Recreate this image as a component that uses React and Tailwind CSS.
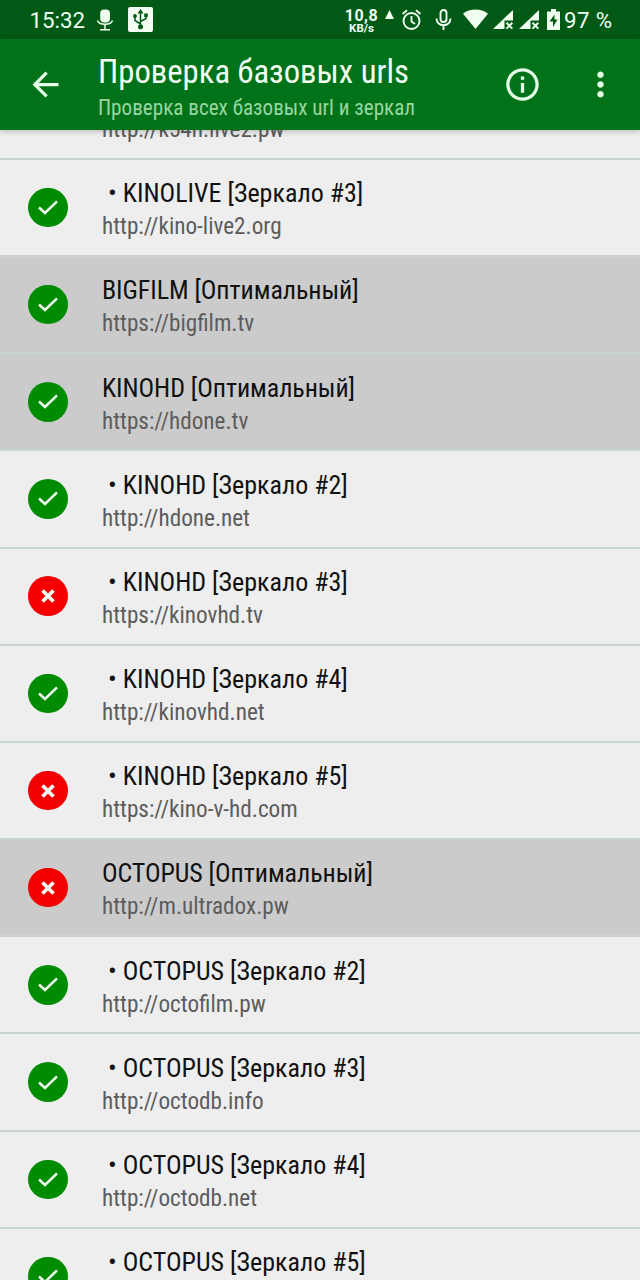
import React from 'react';
import { MdArrowBack, MdInfoOutline, MdMoreVert } from 'react-icons/md';

const ITEMS = [
  { title: 'KINOLIVE [Зеркало #2]', url: 'http://k54h.live2.pw', ok: true },
  { title: 'KINOLIVE [Зеркало #3]', url: 'http://kino-live2.org', ok: true },
  { title: 'BIGFILM [Оптимальный]', url: 'https://bigfilm.tv', ok: true, main: true },
  { title: 'KINOHD [Оптимальный]', url: 'https://hdone.tv', ok: true, main: true },
  { title: 'KINOHD [Зеркало #2]', url: 'http://hdone.net', ok: true },
  { title: 'KINOHD [Зеркало #3]', url: 'https://kinovhd.tv', ok: false },
  { title: 'KINOHD [Зеркало #4]', url: 'http://kinovhd.net', ok: true },
  { title: 'KINOHD [Зеркало #5]', url: 'https://kino-v-hd.com', ok: false },
  { title: 'OCTOPUS [Оптимальный]', url: 'http://m.ultradox.pw', ok: false, main: true },
  { title: 'OCTOPUS [Зеркало #2]', url: 'http://octofilm.pw', ok: true },
  { title: 'OCTOPUS [Зеркало #3]', url: 'http://octodb.info', ok: true },
  { title: 'OCTOPUS [Зеркало #4]', url: 'http://octodb.net', ok: true },
  { title: 'OCTOPUS [Зеркало #5]', url: '', ok: true },
];

const SignalIcon = () => (
  <svg width="21" height="20" viewBox="0 0 21 20" fill="currentColor">
    <path d="M20 0V10.500H11.500V19H0Z" />
    <path d="M13.500 12.800l5.800 5.800M19.300 12.800l-5.800 5.800" stroke="currentColor" strokeWidth="2" />
  </svg>
);

const StatusBar = () => (
  <div className="flex h-[39px] shrink-0 items-center bg-[#005914] pl-[29.500px] font-['Roboto',sans-serif] text-[#f0fff0] [font-stretch:100%]">
    <span className="mt-[2px] w-[66.500px] text-[22.300px] leading-none">15:32</span>
    <svg width="18" height="22" viewBox="0 0 18 22" fill="none" stroke="currentColor">
      <rect x="4.200" y="0.500" width="9.800" height="13" rx="4" fill="currentColor" stroke="none" />
      <path d="M1.500 11.500c1.500 5 13.500 5 15 0M9 15.500v5M4 20.700h10" strokeWidth="1.500" />
    </svg>
    <svg className="ml-[14px]" width="25" height="25" viewBox="0 0 25 25">
      <rect width="25" height="25" rx="2" fill="#f4fff4" />
      <g fill="none" stroke="#005914" strokeWidth="1.500">
        <path d="M12.500 20V5M12.500 17l-5.500-3.500V9.500M12.500 14.500l5.500-3V8.500" />
      </g>
      <g fill="#005914">
        <path d="M12.500 2l3 4.500h-6z" />
        <circle cx="12.500" cy="19.800" r="2.500" />
        <circle cx="7" cy="9" r="1.900" />
        <path d="M16.200 6.500h3.600V10h-3.600z" />
      </g>
    </svg>
    <div className="ml-[191px] mt-[3px] flex w-[35px] flex-col items-center font-bold">
      <span className="text-[16px] leading-[14px] tracking-[0.500px]">10,8</span>
      <span className="text-[11.500px] leading-[10px]">KB/s</span>
    </div>
    <svg className="mb-[11px] ml-[5.500px]" width="9" height="9" viewBox="0 0 9 9" fill="currentColor">
      <path d="M4.500 0L9 9H0z" />
    </svg>
    <svg className="ml-[7px]" width="21" height="22" viewBox="0 0 21 22" fill="none" stroke="currentColor" strokeWidth="1.900">
      <circle cx="10.500" cy="12" r="8" />
      <path d="M10.500 7v5.500l3.500 2.500M1.500 5l4.500-3.800M19.500 5l-4.500-3.800" />
    </svg>
    <svg className="ml-[13px]" width="17" height="22" viewBox="0 0 17 22" fill="none" stroke="currentColor" strokeWidth="1.900">
      <rect x="5.500" y="1" width="6" height="12" rx="3" />
      <path d="M1.500 9.500c0 9 14 9 14 0M8.500 16.500V21" />
    </svg>
    <svg className="ml-[11px]" width="25" height="21" viewBox="0 0 26 21" fill="currentColor">
      <path d="M0 4.500C7-1.200 19-1.200 26 4.500L13 20.500z" />
    </svg>
    <span className="ml-[5px]"><SignalIcon /></span>
    <span className="ml-[5.500px]"><SignalIcon /></span>
    <svg className="ml-[7px]" width="13" height="21" viewBox="0 0 13 21">
      <path d="M4 0h5v2.500h4V21H0V2.500h4z" fill="currentColor" />
      <path d="M7.500 5.500L2.500 12.500h3.500V18L10.500 10.500H7.500z" fill="#005914" />
    </svg>
    <span className="ml-[4px] mt-[2px] whitespace-nowrap text-[22.300px] leading-none tracking-[0.400px]">97 %</span>
  </div>
);

const Toolbar = () => (
  <header className="z-10 flex h-[91px] shrink-0 items-center bg-[#00731a] pl-[26px] text-[#e6ffe6] shadow-[0_1px_6px_rgba(0,0,0,0.25)]">
    <MdArrowBack size={39} />
    <div className="ml-[33px] mt-[5px] w-[405px] whitespace-nowrap">
      <h1 className="text-[32.700px] leading-[40px] text-[#f2fff2]">Проверка базовых urls</h1>
      <p className="pt-0.5 text-[21.150px] leading-[28px] text-[#99d6a0]">Проверка всех базовых url и зеркал</p>
    </div>
    <MdInfoOutline size={39} />
    <MdMoreVert className="ml-[39px]" size={39} />
  </header>
);

const StatusIcon = ({ ok }) => (
  <div className={`flex size-[39.500px] shrink-0 items-center justify-center rounded-full text-[#f4fff4] ${ok ? 'bg-[#008c00]' : 'bg-[#f40000]'}`}>
    {ok ? (
      <svg width="20" height="15" viewBox="0 0 20 15" fill="none" stroke="currentColor" strokeWidth="2.500">
        <path d="M1 7.500l6 5.500L19 1.300" />
      </svg>
    ) : (
      <svg width="14" height="14" viewBox="0 0 14 14" stroke="currentColor" strokeWidth="3.700">
        <path d="M1.500 1.500l11 11M12.500 1.500l-11 11" />
      </svg>
    )}
  </div>
);

const Row = ({ title, url, ok, main }) => (
  <li className={`flex h-[97.200px] shrink-0 items-center border-b-2 border-[#c9d5cd] pl-7 ${main ? 'bg-[#cbcbcb]' : 'bg-[#eeeeee]'}`}>
    <StatusIcon ok={ok} />
    <div className="ml-[34.500px] mt-[3.500px] whitespace-pre">
      <div className={`h-[34px] text-[26px] leading-[34px] text-[#111111] ${main ? 'tracking-[-0.080px]' : ''}`}>
        {main ? title : ` • ${title}`}
      </div>
      <div className="h-[32px] text-[23.200px] leading-[32px] text-[#5c5c5c]">{url}</div>
    </div>
  </li>
);

export default function App() {
  return (
    <div className="flex h-[1280px] w-[640px] flex-col overflow-hidden bg-[#eeeeee] font-['Roboto_Condensed','Roboto',sans-serif] [font-stretch:75%]">
      <StatusBar />
      <Toolbar />
      <ul className="-mt-[67.400px] flex min-h-0 flex-1 flex-col">
        {ITEMS.map((item) => (
          <Row key={item.title} {...item} />
        ))}
      </ul>
    </div>
  );
}
